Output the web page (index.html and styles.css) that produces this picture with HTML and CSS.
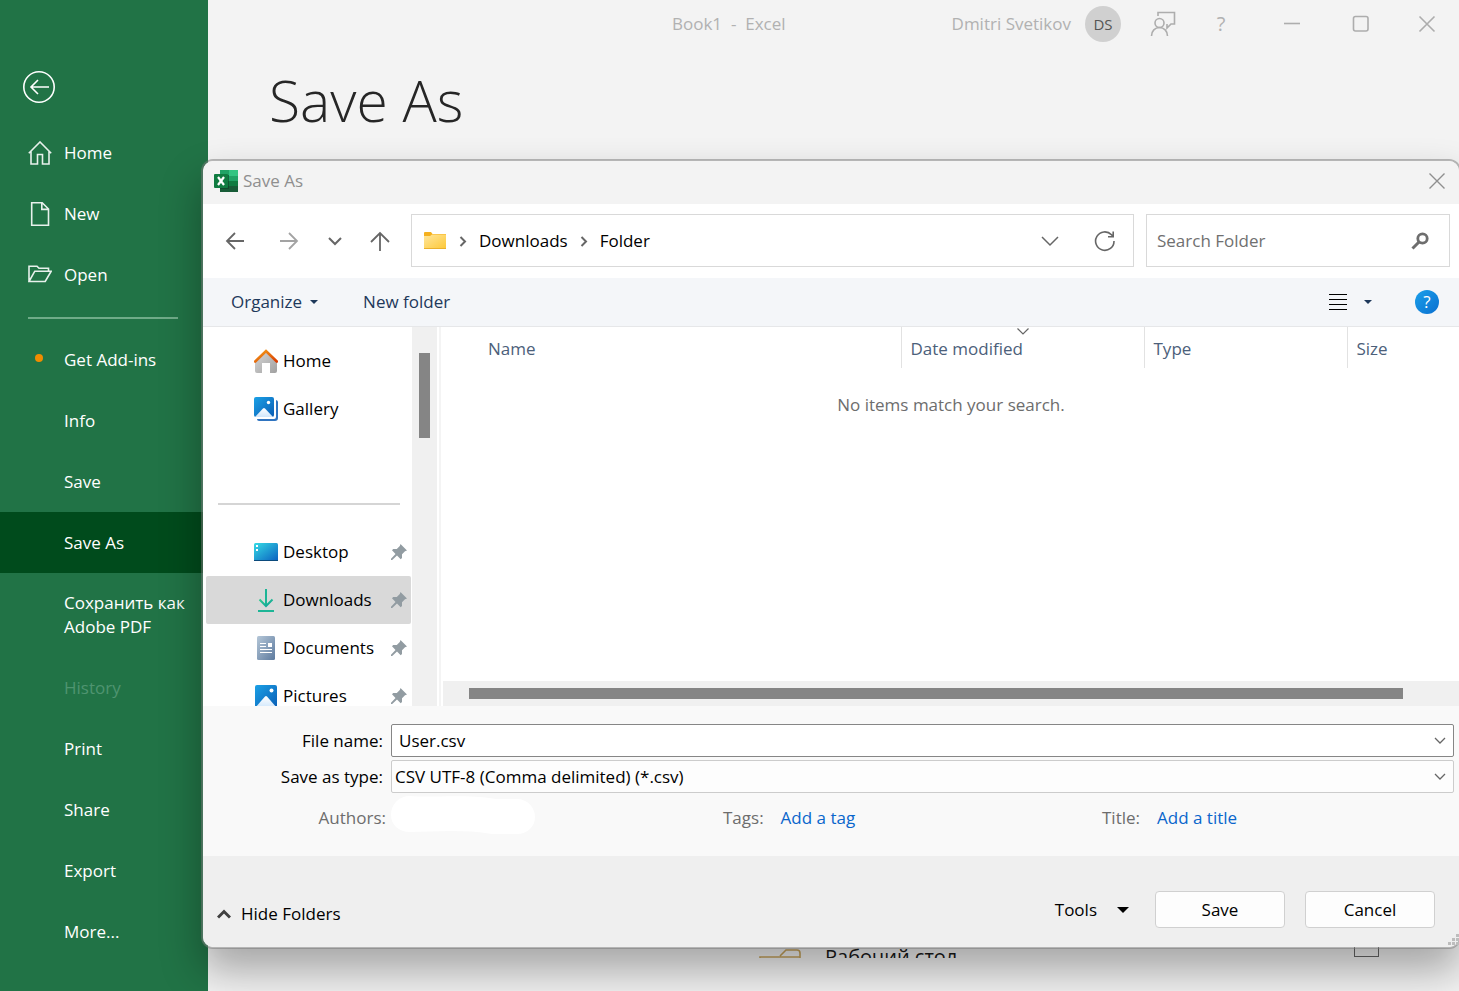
FILE: index.html
```html
<!DOCTYPE html>
<html lang="en">
<head>
  <meta charset="utf-8">
  <meta name="viewport" content="width=device-width, initial-scale=1">
  <title>Book1 - Excel</title>
  <link rel="stylesheet" href="styles.css">
</head>
<body>

<nav class="sidebar">
  <button class="back" aria-label="Back">
    <svg width="34" height="34" viewBox="0 0 34 34" fill="none" stroke="#fff" stroke-width="1.600"><circle cx="17" cy="17" r="15.200"/><path d="M27 17H10M16 10l-7 7 7 7"/></svg>
  </button>
  <a class="item" href="#"><svg width="24" height="24" viewBox="0 0 24 24" fill="none" stroke="#e8f1ec" stroke-width="1.600"><path d="M.8 12.200L12 1l11.200 11.200M3 10.500V23h6.500v-9.500h5V23H21V10.500"/></svg>Home</a>
  <a class="item" href="#"><svg width="24" height="24" viewBox="0 0 24 24" fill="none" stroke="#e8f1ec" stroke-width="1.600"><path d="M3.700.8h10.500L20.500 7v16.200H3.700zM13.800.8v6.600h6.700"/></svg>New</a>
  <a class="item" href="#"><svg width="24" height="24" viewBox="0 0 24 24" fill="none" stroke="#e8f1ec" stroke-width="1.600"><path d="M1 18.500V3.300h8l2 2h9.500v3M1 18.500L6.800 8.200h16.400l-6 10.300z"/></svg>Open</a>
  <hr class="line">
  <a class="item" href="#"><span class="dot"></span>Get Add-ins</a>
  <a class="item" href="#">Info</a>
  <a class="item" href="#">Save</a>
  <a class="item active" href="#">Save As</a>
  <a class="item tall" href="#">Сохранить как Adobe PDF</a>
  <a class="item off" href="#">History</a>
  <a class="item" href="#">Print</a>
  <a class="item" href="#">Share</a>
  <a class="item" href="#">Export</a>
  <a class="item" href="#">More...</a>
</nav>

<main class="backstage">
  <header class="topbar">
    <span class="book">Book1&nbsp; - &nbsp;Excel</span>
    <div class="account">
      <span>Dmitri Svetikov</span>
      <span class="avatar">DS</span>
      <button aria-label="Feedback"><svg width="26" height="26" viewBox="0 0 26 26" fill="none" stroke="#adadad" stroke-width="1.600"><circle cx="9.500" cy="12" r="4.500"/><path d="M1.500 25c0-5 3.500-8.500 8-8.500s8 3.500 8 8.500M8 5V1.500h16.500V13h-3.500l-4 4V13"/></svg></button>
      <button aria-label="Help" class="ask">?</button>
      <button aria-label="Minimize"><svg width="18" height="18" viewBox="0 0 18 18" stroke="#adadad" stroke-width="1.600"><path d="M1 8.500h16"/></svg></button>
      <button aria-label="Maximize"><svg width="18" height="18" viewBox="0 0 18 18" fill="none" stroke="#adadad" stroke-width="1.600"><rect x="1.500" y="1.500" width="14.500" height="14.500" rx="2"/></svg></button>
      <button aria-label="Close"><svg width="18" height="18" viewBox="0 0 18 18" stroke="#adadad" stroke-width="1.600"><path d="M1.500 1.500l15 15M16.500 1.500l-15 15"/></svg></button>
    </div>
  </header>
  <h1>Save As</h1>
  <div class="places">
    <svg width="42" height="36" viewBox="0 0 42 36" fill="none" stroke="#c7a45c" stroke-width="1.600"><path d="M1 9h40v26H1zM21 8l6-6h11q3 0 3 3v4"/></svg>
    <span>Рабочий стол</span>
    <i class="pinbox"></i>
  </div>
</main>

<div class="dialog" role="dialog" aria-label="Save As">
  <div class="titlebar">
    <svg width="24" height="24" viewBox="0 0 24 24"><path fill="#21a366" d="M6 1h9v11H6z"/><path fill="#33c481" d="M15 1h9v6h-9z"/><path fill="#21a366" d="M15 7h9v5h-9z"/><path fill="#107c41" d="M6 12h18v5H6z"/><path fill="#185c37" d="M6 17h18v6H6z"/><path fill="#0b3f24" d="M6 6h9v14H6z" opacity=".6"/><rect y="5" width="14" height="14" rx="1" fill="#107c41"/><path d="M4 8l6 8M10 8l-6 8" stroke="#fff" stroke-width="2.200"/></svg>
    <span>Save As</span>
    <button aria-label="Close dialog"><svg width="18" height="18" viewBox="0 0 18 18" stroke="#8f8f8f" stroke-width="1.400"><path d="M1.500 1.500l15 15M16.500 1.500l-15 15"/></svg></button>
  </div>

  <div class="navbar">
    <div class="arrows">
      <button aria-label="Back"><svg width="20" height="20" viewBox="0 0 20 20" fill="none" stroke="#666" stroke-width="1.800"><path d="M19 10H2M10 2l-8 8 8 8"/></svg></button>
      <button aria-label="Forward" class="fwd"><svg width="20" height="20" viewBox="0 0 20 20" fill="none" stroke="#a3a3a3" stroke-width="1.800"><path d="M1 10h17M10 2l8 8-8 8"/></svg></button>
      <button aria-label="Recent locations"><svg width="14" height="20" viewBox="0 0 14 20" fill="none" stroke="#666" stroke-width="2"><path d="M1 7l6 6 6-6"/></svg></button>
      <button aria-label="Up"><svg width="20" height="20" viewBox="0 0 20 20" fill="none" stroke="#666" stroke-width="1.800"><path d="M10 20V2M1 11l9-9 9 9"/></svg></button>
    </div>
    <div class="address">
      <svg width="24" height="20" viewBox="0 0 24 20"><defs><linearGradient id="fold" x2="1" y2="1"><stop stop-color="#ffe69c"/><stop offset="1" stop-color="#fdc93a"/></linearGradient></defs><path fill="#f5b01d" d="M1 2q0-1 1-1h6l1.500 2H23v4H1z"/><path fill="url(#fold)" d="M1 5h6l2-1.500h14V17H1z"/><path fill="#eab02c" d="M1 17h22v1H1z"/></svg>
      <svg class="sep" width="8" height="12" viewBox="0 0 8 12" fill="none" stroke="#666" stroke-width="2"><path d="M1.500 2L6 6.500 1.500 11"/></svg>
      <a href="#">Downloads</a>
      <svg class="sep" width="8" height="12" viewBox="0 0 8 12" fill="none" stroke="#666" stroke-width="2"><path d="M1.500 2L6 6.500 1.500 11"/></svg>
      <a href="#">Folder</a>
      <button class="drop" aria-label="Previous locations"><svg width="18" height="18" viewBox="0 0 18 18" fill="none" stroke="#666" stroke-width="1.500"><path d="M1 5l8 8 8-8"/></svg></button>
      <button aria-label="Refresh"><svg width="22" height="22" viewBox="0 0 22 22" fill="none" stroke="#666" stroke-width="1.600"><path d="M20 11a9.200 9.200 0 1 1-2.500-6.200L19 6.500M19.200 1.500v5.200H14"/></svg></button>
    </div>
    <div class="search">
      <input type="text" placeholder="Search Folder" aria-label="Search Folder">
      <svg width="18" height="18" viewBox="0 0 18 18" fill="none" stroke="#6e6e6e"><circle cx="11.500" cy="6.500" r="4.700" stroke-width="2.800"/><path d="M8 10l-6.500 6.500" stroke-width="3"/></svg>
    </div>
  </div>

  <div class="toolbar">
    <button>Organize <i class="tri"></i></button>
    <button>New folder</button>
    <button class="view" aria-label="Change your view"><svg width="20" height="20" viewBox="0 0 20 20" stroke="#000" stroke-width="1"><path d="M1 2.500h18M1 7.500h18M1 12.500h18M1 17.500h18"/></svg><i class="tri"></i></button>
    <button class="help" aria-label="Get help">?</button>
  </div>

  <div class="panes">
    <div class="tree">
      <a href="#"><svg width="24" height="24" viewBox="0 0 24 24"><defs><linearGradient id="roof" x2="1" y2="1"><stop stop-color="#f6a01a"/><stop offset="1" stop-color="#d83b01"/></linearGradient><linearGradient id="wall" x2="1" y2="1"><stop stop-color="#d8d8d8"/><stop offset="1" stop-color="#a0a0a0"/></linearGradient></defs><path fill="url(#wall)" d="M1 12L12 2l11 10v10q0 2-2 2h-5V14H8v10H3q-2 0-2-2z"/><path d="M1.200 12.500L12 2l10.800 10.500" fill="none" stroke="url(#roof)" stroke-width="2.600" stroke-linecap="round"/></svg>Home</a>
      <a href="#"><svg width="24" height="24" viewBox="0 0 24 24"><defs><linearGradient id="sky" x2="1" y2="1"><stop stop-color="#1ba1e6"/><stop offset="1" stop-color="#0a5db5"/></linearGradient><linearGradient id="hill" x2="0" y2="1"><stop stop-color="#fff"/><stop offset="1" stop-color="#cfe6fb"/></linearGradient></defs><path d="M22 3q2 .5 2 2v16q0 3-3 3H5q-2 0-2-2h17q2 0 2-2z" fill="#2f74c0"/><rect width="20" height="20" rx="2" fill="url(#sky)"/><path fill="url(#hill)" d="M1 20l8-8.500q1-1 2 0l8 8.500z"/><circle cx="14.500" cy="5.500" r="1.700" fill="#fff"/></svg>Gallery</a>
      <hr>
      <a href="#"><svg width="24" height="24" viewBox="0 0 24 24"><defs><linearGradient id="desk" x2="1" y2="1"><stop stop-color="#35dbe5"/><stop offset="1" stop-color="#0a5fc0"/></linearGradient></defs><rect y="3" width="24" height="18" rx="1.500" fill="url(#desk)"/><path fill="#0b4a7c" d="M0 20h24v1H0z"/><path fill="#fff" d="M2 5h2v2H2zM2 9h2v2H2z"/></svg>Desktop<svg class="pin" width="16" height="16" viewBox="0 0 16 16"><path fill="#929ca2" d="M9.500 0L16 6.500l-2 .7-3 3V14l-1.300 1.200L6 11.500 1.200 16H0v-1.200L4.500 10 1 6.300 2.200 5h3.600l3-3z"/></svg></a>
      <a href="#" class="picked"><svg width="24" height="24" viewBox="0 0 24 24" fill="none"><defs><linearGradient id="down" x2="1" y2="1"><stop stop-color="#2ecc8f"/><stop offset="1" stop-color="#0d9f9a"/></linearGradient></defs><path d="M11 1h2v16h-2zM4 22h16v2H4z" fill="#1db596"/><path d="M5.500 11.500L12 18l6.500-6.500" stroke="url(#down)" stroke-width="2"/></svg>Downloads<svg class="pin" width="16" height="16" viewBox="0 0 16 16"><path fill="#929ca2" d="M9.500 0L16 6.500l-2 .7-3 3V14l-1.300 1.200L6 11.500 1.200 16H0v-1.200L4.500 10 1 6.300 2.200 5h3.600l3-3z"/></svg></a>
      <a href="#"><svg width="24" height="24" viewBox="0 0 24 24"><defs><linearGradient id="doc" x2="1" y2="1"><stop stop-color="#b5c7d8"/><stop offset="1" stop-color="#5d7a9e"/></linearGradient></defs><rect x="3" width="18" height="24" rx="1.500" fill="url(#doc)"/><path fill="#fff" d="M6 7h6v1H6zM6 10h6v1H6zM6 13h12v1H6zM6 16h12v1H6zM14 7h4v4h-4z"/></svg>Documents<svg class="pin" width="16" height="16" viewBox="0 0 16 16"><path fill="#929ca2" d="M9.500 0L16 6.500l-2 .7-3 3V14l-1.300 1.200L6 11.500 1.200 16H0v-1.200L4.500 10 1 6.300 2.200 5h3.600l3-3z"/></svg></a>
      <a href="#"><svg width="24" height="24" viewBox="0 0 24 24"><rect x="1" y="1" width="22" height="23" rx="2" fill="url(#sky)"/><path fill="url(#hill)" d="M1 24l10-11.500q1-1 2 0L23 24z"/><circle cx="17.500" cy="6.500" r="2" fill="#fff"/></svg>Pictures<svg class="pin" width="16" height="16" viewBox="0 0 16 16"><path fill="#929ca2" d="M9.500 0L16 6.500l-2 .7-3 3V14l-1.300 1.200L6 11.500 1.200 16H0v-1.200L4.500 10 1 6.300 2.200 5h3.600l3-3z"/></svg></a>
    </div>
    <div class="vscroll"><div></div></div>
    <div class="files">
      <table>
        <thead>
          <tr><th>Name</th><th class="date">Date modified<svg width="12" height="7" viewBox="0 0 12 7" fill="none" stroke="#666" stroke-width="1.200"><path d="M.5.500L6 6 11.500.500"/></svg></th><th class="type">Type</th><th class="size">Size</th></tr>
        </thead>
        <tbody>
          <tr><td colspan="4">No items match your search.</td></tr>
        </tbody>
      </table>
      <div class="hscroll"><div></div></div>
    </div>
  </div>

  <div class="fields">
    <label for="fname">File name:</label>
    <div class="combo">
      <input id="fname" type="text" value="User.csv">
      <svg width="12" height="8" viewBox="0 0 12 8" fill="none" stroke="#666" stroke-width="1.300"><path d="M1 1l5 5 5-5"/></svg>
    </div>
    <label for="ftype">Save as type:</label>
    <div class="combo light">
      <select id="ftype"><option>CSV UTF-8 (Comma delimited) (*.csv)</option></select>
      <svg width="12" height="8" viewBox="0 0 12 8" fill="none" stroke="#666" stroke-width="1.300"><path d="M1 1l5 5 5-5"/></svg>
    </div>
    <span class="key">Authors:</span>
    <div class="meta">
      <svg width="145" height="40" viewBox="0 0 145 40"><path fill="#fff" d="M0 19C0 8 8 0 19 0c20 2 55-2 86 3h21c10 0 18 8 18 18s-8 17-18 17h-25c-30-5-60-2-82-2C8 36 0 29 0 19z"/></svg>
      <span><span class="key">Tags:</span><a href="#">Add a tag</a></span>
      <span><span class="key">Title:</span><a href="#">Add a title</a></span>
    </div>
  </div>

  <div class="footer">
    <button class="hide"><svg width="14" height="10" viewBox="0 0 14 10" fill="none" stroke="#404040" stroke-width="3"><path d="M1 8.500l6-6 6 6"/></svg>Hide Folders</button>
    <button class="tools">Tools <i class="tri"></i></button>
    <button class="btn">Save</button>
    <button class="btn">Cancel</button>
    <svg class="grip" width="11" height="11" viewBox="0 0 11 11" fill="#bdbdbd"><path d="M8 0h3v3H8zM4 4h3v3H4zM8 4h3v3H8zM0 8h3v3H0zM4 8h3v3H4zM8 8h3v3H8z"/></svg>
  </div>
</div>

</body>
</html>
```

FILE: styles.css
```css
* {
  box-sizing: border-box;
}

body {
  margin: 0;
  min-height: 100vh;
  display: flex;
  position: relative;
  overflow: hidden;
  background: #f3f3f3;
  font-family: "Open Sans", "Noto Sans", sans-serif;
  font-size: 17px;
  line-height: 24px;
  color: #1a1a1a;
}

button, input, select {
  font: inherit;
  color: inherit;
  background: none;
  border: none;
  padding: 0;
  margin: 0;
}

button {
  display: flex;
  align-items: center;
  justify-content: center;
}

a {
  color: inherit;
  text-decoration: none;
}

svg {
  display: block;
  flex: none;
}

/* green menu */
.sidebar {
  width: 208px;
  flex: none;
  background: #217346;
  color: #fff;
}

.back {
  margin: 70px 0 18px 22px;
}

.item {
  display: flex;
  align-items: center;
  position: relative;
  height: 61px;
  padding-left: 64px;
}

.item svg, .item .dot {
  position: absolute;
  left: 28px;
}

.item .dot {
  left: 35px;
  top: 25px;
  width: 8px;
  height: 8px;
  border-radius: 50%;
  background: #f08c00;
}

.item.active {
  background: #004b1c;
}

.item.tall {
  height: 84px;
}

.item.off {
  color: #4f9470;
}

.line {
  height: 2px;
  margin: 12px 30px 10px 28px;
  border: none;
  background: #6fab88;
}

/* page behind the dialog */
.backstage {
  flex: 1;
  display: flex;
  flex-direction: column;
}

.topbar {
  display: flex;
  align-items: center;
  height: 48px;
  color: #b1b1b1;
}

.book {
  flex: 1;
  padding-left: 464px;
}

.account {
  display: flex;
  align-items: center;
}

.account button {
  width: 69px;
  height: 40px;
}

.account button:last-child {
  width: 64px;
}

.account .avatar {
  width: 36px;
  height: 36px;
  margin: 0 6px 0 14px;
  border-radius: 50%;
  background: #d0d0d0;
  color: #555;
  font-size: 15px;
  line-height: 36px;
  text-align: center;
}

.account .avatar + button {
  width: 72px;
}

.account .ask {
  width: 44px;
  margin-right: 14px;
  font-size: 20px;
}

h1 {
  margin: 12px 0 0 61px;
  font-size: 57px;
  line-height: 80px;
  font-weight: 300;
  color: #262626;
}

.places {
  display: flex;
  align-items: flex-start;
  height: 18px;
  margin: auto 80px 33px 551px;
  overflow: hidden;
  font-size: 20px;
}

.places svg {
  margin-top: 8px;
}

.places span {
  flex: 1;
  margin: 5px 0 0 24px;
}

.pinbox {
  width: 25px;
  height: 17px;
  border: 1px solid #666;
}

/* dialog window */
.dialog {
  position: absolute;
  top: 159px;
  left: 201px;
  right: -2px;
  border: 2px solid rgba(120, 120, 120, .5);
  border-radius: 12px;
  background: #f9f9f9;
  background-clip: padding-box;
  box-shadow: 0 22px 42px rgba(0, 0, 0, .32);
}

.titlebar {
  display: flex;
  align-items: center;
  gap: 5px;
  height: 43px;
  padding: 0 13px 3px 11px;
  border-radius: 10px 10px 0 0;
  background: #f3f3f3;
  color: #8f8f8f;
}

.titlebar button {
  margin-left: auto;
}

.navbar {
  display: flex;
  gap: 12px;
  height: 74px;
  padding: 10px 9px 11px 22px;
  background: #fff;
}

.arrows {
  display: flex;
  align-items: center;
  justify-content: space-between;
  width: 165px;
  margin-right: 9px;
}

.arrows .fwd {
  margin-left: 6px;
}

.address {
  flex: 1;
  display: flex;
  align-items: center;
  border: 1px solid #d9d9d9;
  padding: 0 17px 0 11px;
  color: #000;
}

.address .sep {
  margin: 0 12px;
}

.address .drop {
  margin: 0 35px 0 auto;
}

.search {
  display: flex;
  align-items: center;
  width: 304px;
  padding: 0 20px 0 10px;
  border: 1px solid #d9d9d9;
}

.search input {
  flex: 1;
  min-width: 0;
  outline: none;
}

.search input::placeholder {
  color: #707070;
  opacity: 1;
}

.toolbar {
  display: flex;
  align-items: center;
  height: 49px;
  padding: 0 20px 0 28px;
  border-bottom: 1px solid #e6e7e9;
  background: #f4f6f9;
  color: #1e395b;
}

.toolbar button {
  margin-right: 45px;
}

.tri {
  border: 4px solid transparent;
  border-top-color: currentColor;
  border-bottom: none;
  margin-left: 8px;
}

.toolbar .view {
  margin: 0 43px 0 auto;
}

.view .tri {
  margin-left: 16px;
}

.toolbar .help {
  width: 24px;
  height: 24px;
  margin: 0;
  border-radius: 50%;
  background: linear-gradient(135deg, #1ba0ea, #0a6fd0);
  color: #fff;
}

.panes {
  display: flex;
  height: 379px;
  overflow: hidden;
  background: #fff;
}

.tree {
  width: 209px;
  flex: none;
  padding: 10px 1px 0 3px;
  color: #000;
}

.tree a {
  display: flex;
  align-items: center;
  gap: 5px;
  height: 48px;
  padding: 0 4px 0 48px;
  border-radius: 2px;
}

.tree .picked {
  background: #d9d9d9;
}

.tree .pin {
  margin-left: auto;
}

.tree hr {
  height: 2px;
  margin: 70px 11px 23px 12px;
  border: none;
  background: #d5d5d5;
}

.vscroll {
  width: 25px;
  flex: none;
  padding: 26px 7px;
  background: #f0f0f0;
}

.vscroll div {
  height: 85px;
  background: #858585;
}

.files {
  flex: 1;
  display: flex;
  flex-direction: column;
  margin-left: 2px;
  border-left: 2px solid #f4f4f4;
  padding-left: 2px;
}

table {
  width: 100%;
  table-layout: fixed;
  border-collapse: collapse;
}

th {
  position: relative;
  height: 41px;
  padding: 2px 0 0 9px;
  border-left: 1px solid #e2e2e2;
  font-weight: 400;
  text-align: left;
  color: #4c607a;
}

th:first-child {
  padding-left: 45px;
  border: none;
}

th svg {
  position: absolute;
  top: 1px;
  left: 50%;
  transform: translateX(-50%);
}

.date {
  width: 243px;
}

.type {
  width: 203px;
}

.size {
  width: 112px;
}

td {
  padding: 25px 0 0;
  text-align: center;
  color: #6d6d6d;
}

.hscroll {
  margin-top: auto;
  height: 25px;
  padding: 7px 56px 7px 26px;
  background: #f0f0f0;
}

.hscroll div {
  height: 11px;
  background: #858585;
}

/* name, type and properties */
.fields {
  display: grid;
  grid-template-columns: 180px 1fr;
  column-gap: 8px;
  row-gap: 3px;
  align-items: center;
  height: 150px;
  padding: 18px 5px 20px 0;
  align-content: start;
  color: #000;
}

.fields label {
  text-align: right;
}

.combo {
  display: flex;
  align-items: center;
  position: relative;
  height: 33px;
  border: 1px solid #868686;
  border-radius: 2px;
  background: #fff;
}

.combo.light {
  border-color: #ccc;
  background: #fdfdfd;
}

.combo input, .combo select {
  width: 100%;
  height: 100%;
  padding: 0 30px 0 7px;
  outline: none;
  appearance: none;
}

.combo select {
  padding-left: 3px;
}

.combo svg {
  position: absolute;
  right: 7px;
  pointer-events: none;
}

.key {
  color: #6d6d6d;
}

.fields > .key {
  justify-self: end;
  margin-right: -3px;
  padding-top: 3px;
}

.meta {
  display: grid;
  grid-template-columns: 332fr 379fr 352fr;
  align-items: center;
}

.meta > span {
  display: flex;
  gap: 17px;
  padding-top: 3px;
}

.meta a {
  color: #0a66cc;
}

.footer {
  display: flex;
  align-items: center;
  position: relative;
  height: 91px;
  padding: 16px 24px 0 14px;
  border-radius: 0 0 10px 10px;
  background: #efefef;
  color: #000;
}

.hide {
  gap: 10px;
  margin: 8px auto 0 0;
}

.tools {
  margin-right: 26px;
}

.tools .tri {
  border-width: 6px;
  border-bottom: none;
  margin-left: 20px;
}

.btn {
  width: 130px;
  height: 37px;
  border: 1px solid #d0d0d0;
  border-radius: 4px;
  background: #fdfdfd;
}

.btn + .btn {
  margin-left: 20px;
}

.grip {
  position: absolute;
  right: 0;
  bottom: 2px;
}
```
